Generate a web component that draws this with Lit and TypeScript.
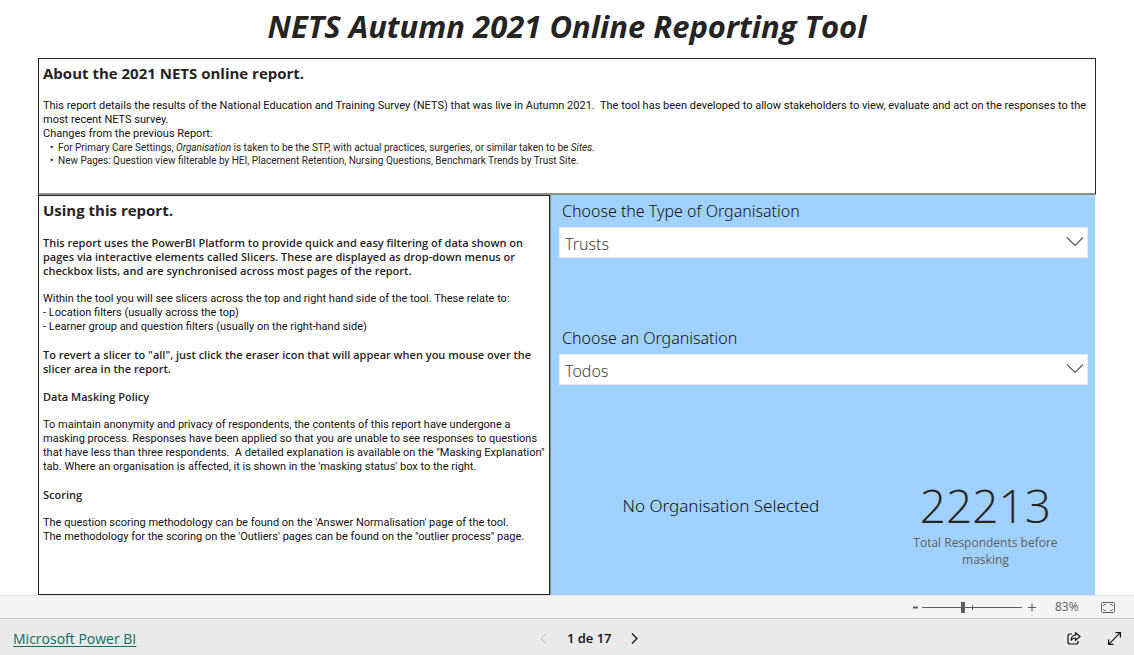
import { LitElement, html, css, svg } from 'lit';
import { customElement, property, state } from 'lit/decorators.js';

@customElement('report-slicer')
class ReportSlicer extends LitElement {
  @property() label = '';
  @property({ attribute: false }) options: string[] = [];

  static styles = css`
    :host { display: block; }
    label {
      display: block;
      padding-left: 3px;
      font: 300 16px/22px "Noto Sans", "Open Sans", sans-serif;
      color: #111;
    }
    .field { display: grid; align-items: center; margin-top: 5px; }
    select, svg { grid-area: 1 / 1; }
    select {
      appearance: none;
      width: 100%;
      height: 31px;
      margin: 0;
      padding: 2px 36px 0 5px;
      border: 1px solid #e6ecf2;
      border-radius: 0;
      background: #fff;
      color: #44423f;
      font: 300 16px/24px "Noto Sans", "Open Sans", sans-serif;
    }
    svg { justify-self: end; margin: 0 4px 2px 0; pointer-events: none; }
  `;

  render() {
    return html`
      <label for="choice">${this.label}</label>
      <div class="field">
        <select id="choice">${this.options.map((o) => html`<option>${o}</option>`)}</select>
        <svg width="18" height="10" viewBox="0 0 18 10" fill="none" stroke="#4d5a66" stroke-width="1.1">
          <path d="M1 0.5 9 8.500 17 .5" />
        </svg>
      </div>`;
  }
}

@customElement('app-root')
class AppRoot extends LitElement {
  @state() private page = 1;
  private readonly pages = 17;

  static styles = css`
    * { box-sizing: border-box; }
    :host {
      display: flex;
      flex-direction: column;
      min-height: 100vh;
      background: #fff;
      color: #252423;
      font-family: "Open Sans", "Noto Sans", sans-serif;
    }
    main { flex: 1; display: flex; flex-direction: column; padding: 0 38px; }
    h1 {
      margin: 0;
      padding: 4px 0 10px;
      text-align: center;
      font: italic 700 31px/44px "Open Sans", sans-serif;
    }
    h2 { margin: 0; font: 700 15px/22px "Open Sans", sans-serif; }
    h3, p, ul { margin: 0; font: 400 11px/14px Roboto, sans-serif; }
    h3, .strong { font-family: "Open Sans", sans-serif; font-weight: 600; }
    p { color: #111; }
    .strong { color: #252423; }
    .about {
      border: 1px solid #252423;
      border-bottom: 2px solid #8f8f8f;
      padding: 3px 4px 26px;
    }
    .about h2 { margin-bottom: 15px; }
    .about ul { padding: 0 0 0 15px; font-size: 10px; line-height: 13px; list-style: none; }
    .about li { display: flex; }
    .about li::before { content: "•"; width: 8px; margin-left: -8px; }
    .columns { flex: 1; display: grid; grid-template-columns: 512fr 545fr; margin-right: 1px; }
    .using {
      display: flex;
      flex-direction: column;
      gap: 14px;
      border: 1px solid #252423;
      padding: 3px 0 4px 4px;
      white-space: nowrap;
    }
    .using h2 { margin-bottom: 1px; }
    .panel {
      display: flex;
      flex-direction: column;
      border-left: 1px solid #7f8f9f;
      background: #a0d1ff;
      padding: 5px 7px 0 8px;
    }
    .panel report-slicer { height: 127px; }
    .cards {
      display: grid;
      grid-template-columns: 60fr 38fr;
      padding-top: 28px;
    }
    .selected { padding-top: 12px; text-align: center; font: 300 17px/24px "Noto Sans", sans-serif; color: #111; }
    .total { margin: 0; text-align: center; }
    .total strong { display: block; margin-bottom: 6px; font: 300 46px/46px "Open Sans", sans-serif; }
    .total strong + span { display: block; max-width: 160px; margin: 0 auto; font: 400 12px/17px "Open Sans", sans-serif; color: #605e5c; }
    .zoom {
      display: flex;
      align-items: center;
      justify-content: flex-end;
      height: 23px;
      padding-right: 19px;
      border-top: 1px solid #e1e1e1;
      background: #f4f4f4;
      color: #605e5c;
      font: 400 12px/16px "Open Sans", sans-serif;
    }
    button {
      display: grid;
      place-items: center;
      padding: 0;
      border: 0;
      background: none;
      color: inherit;
    }
    .step { width: 20px; height: 20px; }
    .step:first-child { width: 14px; }
    .slider {
      appearance: none;
      width: 100px;
      height: 12px;
      margin: 0;
      background:
        linear-gradient(#605e5c, #605e5c) 50px 50% / 1px 5px no-repeat,
        linear-gradient(#605e5c, #605e5c) 0 50% / 100% 1px no-repeat;
    }
    .slider::-webkit-slider-thumb {
      appearance: none;
      width: 4px;
      height: 11px;
      background: #605e5c;
    }
    output { width: 37px; margin-right: 22px; padding-left: 13px; }
    footer {
      display: grid;
      grid-template-columns: 12fr auto 11fr;
      align-items: center;
      height: 37px;
      border-top: 1px solid #c8c8c8;
      background: #eaeaea;
      color: #111;
    }
    a { justify-self: start; margin: 4px 0 0 13px; color: #0f6a60; font-size: 14px; line-height: 20px; text-underline-offset: 2px; }
    nav { display: flex; align-items: center; gap: 13px; padding-top: 2px; }
    nav span { min-width: 43px; text-align: center; font-size: 13px; font-weight: 600; line-height: 20px; }
    nav button { width: 20px; height: 20px; }
    nav button:disabled { color: #bdbdbd; }
    .tools { display: flex; justify-content: flex-end; padding-top: 2px; }
    .tools button { width: 40px; height: 30px; }
  `;

  private icon(w: number, h: number, d: string, stroke = 1) {
    return html`<svg width=${w} height=${h} viewBox="0 0 ${w} ${h}" fill="none" stroke="currentColor" stroke-width=${stroke}>${svg`<path d=${d} />`}</svg>`;
  }

  render() {
    return html`
      <main>
        <h1>NETS Autumn 2021 Online Reporting Tool</h1>
        <section class="about">
          <h2>About the 2021 NETS online report.</h2>
          <p>This report details the results of the National Education and Training Survey (NETS) that was live in Autumn 2021.&nbsp; The tool has been developed to allow stakeholders to view, evaluate and act on the responses to the most recent NETS survey.</p>
          <p>Changes from the previous Report:</p>
          <ul>
            <li><span>For Primary Care Settings, <em>Organisation</em> is taken to be the STP, with actual practices, surgeries, or similar taken to be <em>Sites.</em></span></li>
            <li><span>New Pages: Question view filterable by HEI, Placement Retention, Nursing Questions, Benchmark Trends by Trust Site.</span></li>
          </ul>
        </section>
        <div class="columns">
          <section class="using">
            <h2>Using this report.</h2>
            <p class="strong">This report uses the PowerBI Platform to provide quick and easy filtering of data shown on<br>pages via interactive elements called Slicers. These are displayed as drop-down menus or<br>checkbox lists, and are synchronised across most pages of the report.</p>
            <p>Within the tool you will see slicers across the top and right hand side of the tool. These relate to:<br>- Location filters (usually across the top)<br>- Learner group and question filters (usually on the right-hand side)</p>
            <p class="strong">To revert a slicer to "all", just click the eraser icon that will appear when you mouse over the<br>slicer area in the report.</p>
            <h3>Data Masking Policy</h3>
            <p>To maintain anonymity and privacy of respondents, the contents of this report have undergone a<br>masking process. Responses have been applied so that you are unable to see responses to questions<br>that have less than three respondents.&nbsp; A detailed explanation is available on the "Masking Explanation"<br>tab. Where an organisation is affected, it is shown in the 'masking status' box to the right.</p>
            <h3>Scoring</h3>
            <p>The question scoring methodology can be found on the 'Answer Normalisation' page of the tool.<br>The methodology for the scoring on the 'Outliers' pages can be found on the "outlier process" page.</p>
          </section>
          <section class="panel">
            <report-slicer label="Choose the Type of Organisation" .options=${['Trusts']}></report-slicer>
            <report-slicer label="Choose an Organisation" .options=${['Todos']}></report-slicer>
            <div class="cards">
              <div class="selected">No Organisation Selected</div>
              <div class="total"><strong>22213</strong><span>Total Respondents before masking</span></div>
            </div>
          </section>
        </div>
      </main>
      <div class="zoom">
        <button class="step" aria-label="Zoom out">${this.icon(5, 9, 'M0 4.500H5', 2)}</button>
        <input class="slider" type="range" aria-label="Zoom" min="0" max="100" value="41">
        <button class="step" aria-label="Zoom in">${this.icon(8, 9, 'M0 4.500H8M4 .5V8.500', 1.200)}</button>
        <output>83%</output>
        <button aria-label="Fit to page">
          ${this.icon(14, 11, 'M1.500.5H12.500Q13.500.5 13.500 1.500V9.500Q13.500 10.500 12.500 10.500H1.500Q.5 10.500.5 9.500V1.500Q.5.5 1.500.5ZM5 2.500H3.500Q2.500 2.500 2.500 4M9 2.500H10.500Q11.500 2.500 11.500 4M2.500 7Q2.500 8.500 3.500 8.500H5M11.500 7Q11.500 8.500 10.500 8.500H9')}
        </button>
      </div>
      <footer>
        <a href="#">Microsoft Power BI</a>
        <nav>
          <button aria-label="Previous page" ?disabled=${this.page === 1} @click=${() => this.page--}>${this.icon(7, 11, 'M6 .5 1 5.500 6 10.500')}</button>
          <span>${this.page} de ${this.pages}</span>
          <button aria-label="Next page" ?disabled=${this.page === this.pages} @click=${() => this.page++}>${this.icon(7, 11, 'M1 .5 6 5.500 1 10.500', 1.200)}</button>
        </nav>
        <div class="tools">
          <button aria-label="Share">
            ${this.icon(14, 13, 'M5 2H3Q1 2 1 4V10Q1 12 3 12H9Q11 12 11 10V9M8.500.8 13 4.500 8.500 8.200V6Q5.500 6 4 8.500 4.500 3.300 8.500 3Z', 1.200)}
          </button>
          <button aria-label="Full screen">
            ${this.icon(13, 13, 'M.7 12.300 12.300.7M7.500.6H12.400V5.500M.6 7.500V12.400H5.500', 1.200)}
          </button>
        </div>
      </footer>`;
  }
}
